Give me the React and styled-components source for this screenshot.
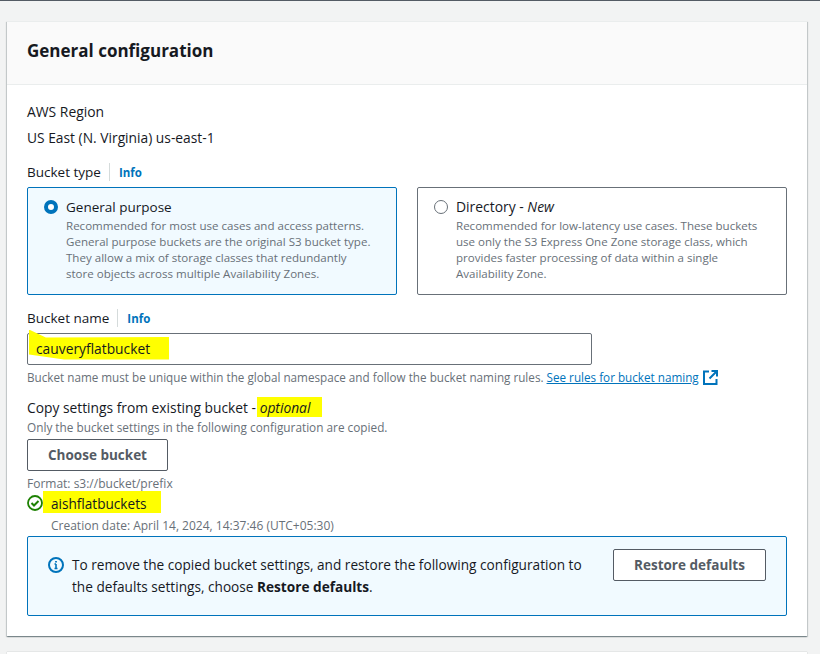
import React from 'react';
import styled, { createGlobalStyle } from 'styled-components';

const GlobalStyle = createGlobalStyle`
  html, body {
    margin: 0;
    padding: 0;
    background: #f2f3f3;
    overflow: hidden;
  }
  body {
    font-family: "Open Sans", "Noto Sans", sans-serif;
    color: #16191f;
  }
`;

const Page = styled.div`
  height: 654px;
  box-sizing: border-box;
  border-top: 1px solid #545b64;
  padding: 20px 13px 0 7px;
  overflow: hidden;
`;

const Card = styled.section`
  background: #fff;
  box-shadow: 0 1px 1px 0 rgba(0, 28, 36, 0.3), 1px 1px 1px 0 rgba(0, 28, 36, 0.15), -1px 1px 1px 0 rgba(0, 28, 36, 0.15);
  border-top: 1px solid #eaeded;
  margin-bottom: 16px;
`;

const CardHeader = styled.header`
  height: 63px;
  box-sizing: border-box;
  display: flex;
  align-items: center;
  padding: 0 20px 4px;
  background: #fafafa;
  border-bottom: 1px solid #eaeded;
`;

const Title = styled.h2`
  margin: 0;
  font-size: 17px;
  line-height: 24px;
  font-weight: 700;
`;

const CardBody = styled.div`
  height: 551px;
  box-sizing: border-box;
  padding: 17px 20px 0;
`;

const Text = styled.div`
  font-size: ${p => p.$size || 13.9}px;
  line-height: 20px;
  margin-top: ${p => p.$top || 0}px;
`;

const LabelRow = styled.div`
  display: flex;
  align-items: center;
  height: 20px;
  font-size: 13.5px;
  margin-top: ${p => p.$top || 0}px;
`;

const InfoLink = styled.a`
  margin-left: 8px;
  padding-left: 9px;
  padding-top: 1px;
  border-left: 1px solid #d5dbdb;
  color: #0073bb;
  font-size: 11.5px;
  font-weight: 700;
  line-height: 17px;
`;

const Tiles = styled.div`
  display: grid;
  grid-template-columns: 370px 370px;
  column-gap: 20px;
  margin-top: 5px;
`;

const Tile = styled.div`
  height: 108px;
  box-sizing: border-box;
  display: flex;
  gap: 8px;
  padding: 10px 16px;
  border: 1px solid ${p => (p.$selected ? '#0073bb' : '#687078')};
  border-radius: 2px;
  background: ${p => (p.$selected ? '#f1faff' : '#fff')};
`;

const Radio = styled.span`
  flex: none;
  width: 14px;
  height: 14px;
  margin-top: 2px;
  border-radius: 50%;
  box-sizing: border-box;
  background: #fff;
  border: ${p => (p.$on ? '4px solid #0073bb' : '1px solid #687078')};
`;

const TileTitle = styled.div`
  font-size: ${p => p.$size || 13.5}px;
  line-height: 18px;
  margin-bottom: 2px;
`;

const TileText = styled.div`
  font-size: 11.55px;
  line-height: 16px;
  color: #687078;
  white-space: pre-line;
`;

const Input = styled.div`
  width: 565px;
  height: 32px;
  box-sizing: border-box;
  display: flex;
  align-items: center;
  padding: 0 8px 2px;
  margin-top: 5px;
  border: 1px solid #687078;
  border-radius: 2px;
  font-size: 13.8px;
  position: relative;
`;

const Hint = styled.div`
  display: flex;
  align-items: center;
  font-size: ${p => p.$size || 11.8}px;
  line-height: 16px;
  color: #687078;
  margin-top: ${p => p.$top || 0}px;
  margin-left: ${p => p.$left || 0}px;
`;

const HintLink = styled.a`
  color: #0073bb;
  text-decoration: underline;
  margin-left: 3px;
  margin-right: 4px;
`;

// freehand yellow marker stroke laid behind the text
const Marker = styled.span`
  position: relative;
  z-index: 0;
  &::before {
    content: "";
    position: absolute;
    z-index: -1;
    top: ${p => p.$top}px;
    bottom: ${p => p.$bottom}px;
    left: ${p => p.$left}px;
    right: ${p => p.$right}px;
    background: #ffff00;
    clip-path: ${p => p.$clip || 'none'};
  }
`;

const Button = styled.button`
  display: block;
  width: ${p => p.$width}px;
  height: 32px;
  padding: 0;
  background: #fff;
  border: 1px solid #545b64;
  border-radius: 2px;
  color: #545b64;
  font-family: inherit;
  font-size: 13.5px;
  font-weight: 700;
  flex: none;
  margin-top: ${p => p.$top || 0}px;
`;

const SelectedRow = styled.div`
  display: flex;
  align-items: center;
  height: 20px;
  margin-top: 1px;
  gap: 8px;
  font-size: 13.6px;
`;

const Alert = styled.div`
  height: 80px;
  box-sizing: border-box;
  margin-top: 2px;
  display: flex;
  justify-content: space-between;
  padding: 12px 20px;
  background: #f1faff;
  border: 1px solid #0073bb;
  border-radius: 2px;
`;

const AlertMain = styled.div`
  display: flex;
  gap: 8px;
  width: 545px;
`;

const AlertText = styled.div`
  font-size: 13.65px;
  line-height: 22px;
  padding-top: 5px;
`;

const AlertIcon = styled.svg`
  flex: none;
  width: 16px;
  height: 16px;
  margin-top: 8px;
`;

const NextCard = styled.section`
  height: 40px;
  background: #fff;
  box-shadow: 0 0 1px 0 rgba(0, 28, 36, 0.3);
`;

const InfoIcon = () => (
  <AlertIcon viewBox="0 0 16 16" fill="none" stroke="#0073bb" strokeWidth="2">
    <circle cx="8" cy="8" r="7" />
    <path d="M8 7v4.5M6.5 11.5h3M6.5 7H8" strokeWidth="1.6" />
    <path d="M8 4v1.6" strokeWidth="1.8" />
  </AlertIcon>
);

const CheckIcon = () => (
  <svg width="16" height="16" viewBox="0 0 16 16" fill="none" stroke="#1d8102" strokeWidth="1.8">
    <circle cx="8" cy="8" r="7" />
    <path d="M4.5 8l2.5 2.5 4.5-4.5" strokeWidth="2" />
  </svg>
);

const ExternalIcon = () => (
  <svg width="15" height="15" viewBox="0 0 15 15" fill="none" stroke="#0073bb" strokeWidth="2">
    <path d="M6 1.5H1v12.5h12.5V9" />
    <path d="M8.5 1H14v5.5M14 1L6.5 8.5" />
  </svg>
);

const App = () => {
  return (
    <Page>
      <GlobalStyle />
      <Card>
        <CardHeader>
          <Title>General configuration</Title>
        </CardHeader>
        <CardBody>
          <Text>AWS Region</Text>
          <Text $top={6} $size={13.8}>US East (N. Virginia) us-east-1</Text>
          <LabelRow $top={14}>
            Bucket type
            <InfoLink>Info</InfoLink>
          </LabelRow>
          <Tiles>
            <Tile $selected>
              <Radio $on />
              <div>
                <TileTitle>General purpose</TileTitle>
                <TileText>{`Recommended for most use cases and access patterns.
General purpose buckets are the original S3 bucket type.
They allow a mix of storage classes that redundantly
store objects across multiple Availability Zones.`}</TileText>
              </div>
            </Tile>
            <Tile>
              <Radio />
              <div>
                <TileTitle $size={13.9}>Directory - <em>New</em></TileTitle>
                <TileText>{`Recommended for low-latency use cases. These buckets
use only the S3 Express One Zone storage class, which
provides faster processing of data within a single
Availability Zone.`}</TileText>
              </div>
            </Tile>
          </Tiles>
          <LabelRow $top={13}>
            Bucket name
            <InfoLink>Info</InfoLink>
          </LabelRow>
          <Input>
            <Marker $top={-9} $bottom={-2} $left={-7} $right={-19} $clip="polygon(0 0, 12% 27%, 100% 25%, 100% 100%, 25% 100%, 0 83%)">
              cauveryflatbucket
            </Marker>
          </Input>
          <Hint $top={4} $size={11.7}>
            Bucket name must be unique within the global namespace and follow the bucket naming rules.
            <HintLink>See rules for bucket naming</HintLink>
            <ExternalIcon />
          </Hint>
          <Text $top={13} $size={13.8}>
            Copy settings from existing bucket -{' '}
            <Marker $top={-1} $bottom={0} $left={-3} $right={-12}><em>optional</em></Marker>
          </Text>
          <Hint $top={1}>Only the bucket settings in the following configuration are copied.</Hint>
          <Button $width={141} $top={4}>Choose bucket</Button>
          <Hint $top={5} $size={12}>Format: s3://bucket/prefix</Hint>
          <SelectedRow>
            <CheckIcon />
            <Marker $top={-3} $bottom={0} $left={-8} $right={-15}>aishflatbuckets</Marker>
          </SelectedRow>
          <Hint $top={5} $left={24} $size={12}>Creation date: April 14, 2024, 14:37:46 (UTC+05:30)</Hint>
          <Alert>
            <AlertMain>
              <InfoIcon />
              <AlertText>
                To remove the copied bucket settings, and restore the following configuration to the defaults settings, choose <b>Restore defaults</b>.
              </AlertText>
            </AlertMain>
            <Button $width={153}>Restore defaults</Button>
          </Alert>
        </CardBody>
      </Card>
      <NextCard />
    </Page>
  );
};

export default App;
